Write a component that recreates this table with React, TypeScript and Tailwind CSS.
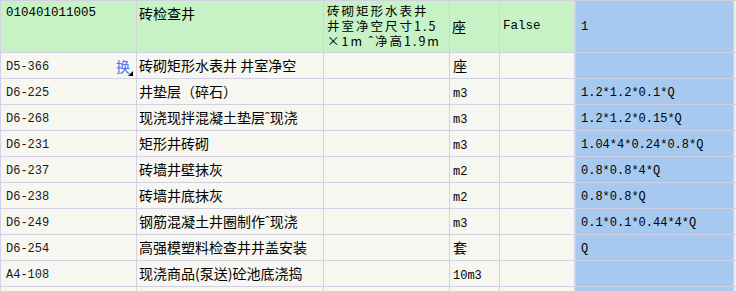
import React from "react";

const cjk = { fontFamily: '"Noto Sans CJK SC", "Liberation Sans", sans-serif' };
const mono = { fontFamily: '"Liberation Mono", "Noto Sans CJK SC", monospace' };

type Row = {
  code: string;
  name: string;
  unit: string;
  formula: string;
  swap?: boolean;
};

const rows: Row[] = [
  { code: "D5-366", name: "砖砌矩形水表井 井室净空", unit: "座", formula: "", swap: true },
  { code: "D6-225", name: "井垫层（碎石）", unit: "m3", formula: "1.2*1.2*0.1*Q" },
  { code: "D6-268", name: "现浇现拌混凝土垫层ˆ现浇", unit: "m3", formula: "1.2*1.2*0.15*Q" },
  { code: "D6-231", name: "矩形井砖砌", unit: "m3", formula: "1.04*4*0.24*0.8*Q" },
  { code: "D6-237", name: "砖墙井壁抹灰", unit: "m2", formula: "0.8*0.8*4*Q" },
  { code: "D6-238", name: "砖墙井底抹灰", unit: "m2", formula: "0.8*0.8*Q" },
  { code: "D6-249", name: "钢筋混凝土井圈制作ˆ现浇", unit: "m3", formula: "0.1*0.1*0.44*4*Q" },
  { code: "D6-254", name: "高强模塑料检查井井盖安装", unit: "套", formula: "Q" },
  { code: "A4-108", name: "现浇商品(泵送)砼池底浇捣", unit: "10m3", formula: "" },
];

const Unit = ({ u }: { u: string }) =>
  /[a-z0-9]/i.test(u) ? (
    <span style={mono} className="text-[12px] pt-[4px]">
      {u}
    </span>
  ) : (
    <span style={cjk} className="text-[14px]">
      {u}
    </span>
  );

const App = () => {
  return (
    <div className="w-[736px] h-[291px] overflow-hidden bg-white">
      <div className="grid grid-cols-[135px_186px_125px_49px_74px_158px_2px] grid-rows-[51px_repeat(9,25px)_4px] gap-px pt-px pl-px bg-[#d3d0e3] text-black">
        {/* header */}
        <div className="bg-[#c6f2c6] pl-[5px] pt-[4px] text-[12.5px] leading-[16px]" style={mono}>
          010401011005
        </div>
        <div className="bg-[#c6f2c6] pl-[2px] pt-[3px] text-[14px] leading-[18px]" style={cjk}>
          砖检查井
        </div>
        <div className="bg-[#c6f2c6] pl-[3px] pt-[2px] text-[12.5px] leading-[15px] tracking-[2px]" style={cjk}>
          <div>砖砌矩形水表井</div>
          <div>井室净空尺寸1.5</div>
          <div>×1m ˆ净高1.9m</div>
        </div>
        <div className="bg-[#c6f2c6] pl-[2px] flex items-center text-[14px]" style={cjk}>
          座
        </div>
        <div className="bg-[#c6f2c6] pl-[3px] flex items-center text-[12.5px]" style={mono}>
          False
        </div>
        <div className="bg-[#a7c9ef] border-l border-[#d3d0e3] pl-[5px] flex items-center text-[12px]" style={mono}>
          1
        </div>
        <div className="bg-[#dff5df]" />

        {/* body */}
        {rows.map((r) => (
          <React.Fragment key={r.code}>
            <div className="relative bg-[#f7f7f2] pl-[5px] pt-[2px] flex items-center text-[12px] text-[#1a1a1a]" style={mono}>
              {r.code}
              {r.swap && (
                <>
                  <span
                    className="absolute right-[6px] top-[3px] text-[14px] text-[#3f74ee]"
                    style={cjk}
                  >
                    换
                  </span>
                  <span className="absolute right-[3px] bottom-[2px] w-0 h-0 border-l-[5px] border-l-transparent border-b-[5px] border-b-black" />
                </>
              )}
            </div>
            <div className="bg-[#f7f7f2] pl-[2px] flex items-center text-[14px] whitespace-nowrap overflow-hidden" style={cjk}>
              {r.name}
            </div>
            <div className="bg-[#f7f7f2]" />
            <div className="bg-[#f7f7f2] pl-[3px] flex items-center">
              <Unit u={r.unit} />
            </div>
            <div className="bg-[#f7f7f2]" />
            <div className="bg-[#a7c9ef] border-l border-[#d3d0e3] pl-[5px] pt-[3px] flex items-center text-[12px]" style={mono}>
              {r.formula}
            </div>
            <div className="bg-[#e4eef9]" />
          </React.Fragment>
        ))}

        {/* partial row at bottom */}
        <div className="bg-[#f7f7f2]" />
        <div className="bg-[#f7f7f2]" />
        <div className="bg-[#f7f7f2]" />
        <div className="bg-[#f7f7f2]" />
        <div className="bg-[#f7f7f2]" />
        <div className="bg-[#a7c9ef] border-l border-[#d3d0e3]" />
        <div className="bg-[#e4eef9]" />
      </div>
    </div>
  );
};

export default App;
